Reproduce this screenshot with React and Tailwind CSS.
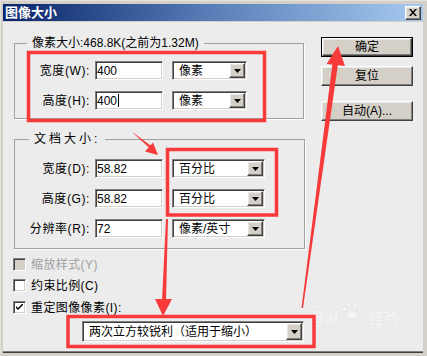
import React from 'react'

const FONT = "font-['Liberation_Sans','Noto_Sans_CJK_SC',sans-serif]"
const RAISED = 'bg-[#d4d0c8] border border-t-white border-l-white border-b-[#404040] border-r-[#404040] shadow-[inset_-1px_-1px_0_#808080,inset_1px_1px_0_#e8e8e8]'
const SUNKEN = 'border border-t-[#808080] border-l-[#808080] border-b-white border-r-white shadow-[inset_1px_1px_0_#404040,inset_-1px_-1px_0_#d4d0c8]'

function Arrow() {
  return (
    <svg width="7" height="4" viewBox="0 0 7 4">
      <polygon points="0,0 7,0 3.5,4" fill="#000" />
    </svg>
  )
}

function Field({ value, caret }) {
  return (
    <div className={`${SUNKEN} bg-white w-[68px] h-[19px] flex items-center pl-[1px] text-[12px] leading-none`}>
      {value}
      {caret && <span className="inline-block w-px h-[13px] bg-black ml-px" />}
    </div>
  )
}

function Select({ value, width }) {
  return (
    <div className={`${SUNKEN} bg-white h-[19px] flex p-px ${width}`}>
      <div className="flex-1 flex items-center pl-[5px] text-[12px] leading-none">{value}</div>
      <div className={`${RAISED} w-[16px] h-full flex items-center justify-center`}>
        <Arrow />
      </div>
    </div>
  )
}

function Row({ label, value, unit, selectWidth, caret, className = '' }) {
  return (
    <div className={`flex items-center h-[19px] ${className}`}>
      <div className="w-[75px] text-right text-[12px] leading-none tracking-[0.6px]">{label}</div>
      <div className="ml-[5px]">
        <Field value={value} caret={caret} />
      </div>
      <div className="ml-[9px]">
        <Select value={unit} width={selectWidth} />
      </div>
    </div>
  )
}

function Group({ legend, legendClass = '', className, children }) {
  return (
    <div className={`relative border border-[#a0a0a0] shadow-[1px_1px_0_white] ${className}`}>
      <span className={`absolute top-[-8px] bg-[#ececec] px-[5px] text-[12px] leading-[14px] ${legendClass}`}>
        {legend}
      </span>
      {children}
    </div>
  )
}

function Check({ label, checked, disabled, className = '' }) {
  return (
    <div className={`flex items-center h-[13px] -ml-px ${className}`}>
      <div className={`${SUNKEN} w-[13px] h-[13px] flex items-center justify-center ${disabled ? 'bg-[#d4d0c8]' : 'bg-white'}`}>
        {checked && (
          <svg width="7" height="7" viewBox="0 0 7 7">
            <path d="M0 2 L0 4 L2 6 L7 1 L7 -1 L2 4 Z" fill="#000" />
          </svg>
        )}
      </div>
      <span className={`ml-[5px] text-[12px] leading-none tracking-[0.4px] ${disabled ? 'text-[#a0a0a0]' : 'text-black'}`}>{label}</span>
    </div>
  )
}

function Button({ label, isDefault, className = '' }) {
  return (
    <div className={`w-[92px] h-[20px] ${isDefault ? 'border border-black' : ''} ${className}`}>
      <div className={`${RAISED} h-full flex items-center justify-center text-[12px] leading-none`}>{label}</div>
    </div>
  )
}

export default function App() {
  return (
    <div className={`relative w-[427px] h-[356px] bg-[#d4d0c8] overflow-hidden text-black ${FONT}`}>
      <div className="absolute inset-0 border-t border-l border-[#e4e2dc]" />
      <div className="pt-[4px] pl-[3px] pr-[4px]">
        {/* Title bar */}
        <div className="h-[17px] flex items-center justify-between bg-linear-to-r from-[#0a246a] via-[#5a7fb8] to-[#a6caf0]">
          <span className="pl-[2px] text-white font-bold text-[13px] leading-none">图像大小</span>
          <div className={`${RAISED} w-[16px] h-[14px] mr-[2px] flex items-center justify-center`}>
            <svg width="8" height="7" viewBox="0 0 8 7">
              <path d="M0 0 L2 0 L4 2.5 L6 0 L8 0 L5 3.5 L8 7 L6 7 L4 4.5 L2 7 L0 7 L3 3.5 Z" fill="#000" />
            </svg>
          </div>
        </div>

        {/* Body */}
        <div className="mt-[1px] h-[329px] bg-[#ececec] flex">
          <div className="ml-[11px] w-[291px] flex flex-col">
            <Group legend="像素大小:468.8K(之前为1.32M)" legendClass="left-[12px]" className="mt-[21px] w-[290px] h-[76px] pt-[17px]">
              <Row label="宽度(W):" value="400" unit="像素" selectWidth="w-[75px]" />
              <Row label="高度(H):" value="400" unit="像素" selectWidth="w-[75px]" caret className="mt-[11px]" />
            </Group>

            <Group legend="文档大小:" legendClass="left-[14px] tracking-[3px]" className="mt-[20px] w-[291px] h-[110px] pt-[19px]">
              <Row label="宽度(D):" value="58.82" unit="百分比" selectWidth="w-[93px]" />
              <Row label="高度(G):" value="58.82" unit="百分比" selectWidth="w-[93px]" className="mt-[11px]" />
              <Row label="分辨率(R):" value="72" unit="像素/英寸" selectWidth="w-[93px]" className="mt-[11px]" />
            </Group>

            <Check label="缩放样式(Y)" disabled className="mt-[9px]" />
            <Check label="约束比例(C)" className="mt-[8px]" />
            <Check label="重定图像像素(I):" checked className="mt-[9px]" />

            <div className="mt-[7px] ml-[68px]">
              <div className={`${SUNKEN} bg-white h-[21px] w-[222px] flex p-px`}>
                <div className="flex-1 flex items-center pl-[5px] text-[12px] leading-none">两次立方较锐利（适用于缩小）</div>
                <div className={`${RAISED} w-[16px] h-full flex items-center justify-center`}>
                  <Arrow />
                </div>
              </div>
            </div>
          </div>

          <div className="ml-[16px] flex flex-col">
            <Button label="确定" isDefault className="mt-[15px]" />
            <Button label="复位" className="mt-[9px]" />
            <Button label="自动(A)..." className="mt-[15px]" />
          </div>
        </div>
        <div className="h-px bg-[#808080]" />
        <div className="h-px bg-[#404040]" />
      </div>

      {/* Watermark */}
      <div className="absolute left-[312px] top-[302px] flex flex-col items-start pointer-events-none opacity-70">
        <div className="flex items-end text-[#f8f8f8] [text-shadow:0_0_1px_#d6d6d6] font-bold leading-none">
          <span className="text-[17px]">Bai</span>
          <svg width="26" height="18" viewBox="0 0 26 18" className="mb-[6px]">
            <g fill="#f8f8f8" stroke="#d6d6d6" strokeWidth="0.6">
              <circle cx="6" cy="7" r="2.5" />
              <circle cx="11" cy="3" r="2.5" />
              <circle cx="17" cy="3" r="2.5" />
              <circle cx="22" cy="7.5" r="2.2" />
              <ellipse cx="14" cy="13" rx="6" ry="4.5" />
            </g>
          </svg>
          <span className="text-[15px] ml-[4px]">经验</span>
        </div>
        <span className="text-[11px] leading-none mt-[4px] text-[#f6f6f6] [text-shadow:0_0_1px_#d6d6d6]">jingyan.baidu.com</span>
      </div>

      {/* Annotations */}
      <svg className="absolute inset-0 pointer-events-none" width="427" height="356" viewBox="0 0 427 356">
        <g fill="none" stroke="#f83a3a" strokeWidth="3.5">
          <rect x="28.5" y="52.5" width="236" height="68" />
          <rect x="167.5" y="149.5" width="109" height="65.5" />
          <rect x="68" y="316.5" width="246" height="30" />
        </g>
        <g fill="#f83a3a">
          <polygon points="133,132.5 133.6,133.6 150,148.6 151.6,146.2" />
          <polygon points="158,155 145,151.6 153,142.6" />
          <polygon points="166,219 168,219 166,301 162,301" />
          <polygon points="163,316 155,299 172,299" />
          <polygon points="301.5,308 303,308 338,64 332.5,63" />
          <polygon points="338,46 326.6,64 345,66" />
        </g>
      </svg>
    </div>
  )
}
